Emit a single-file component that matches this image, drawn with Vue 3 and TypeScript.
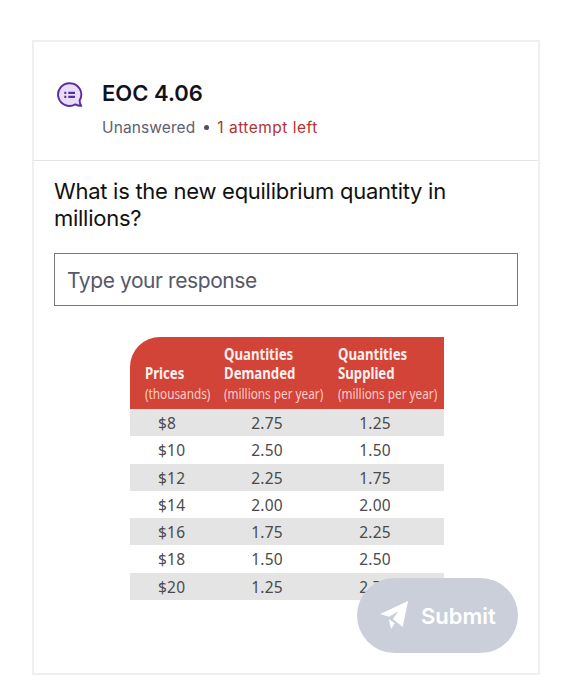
<script setup lang="ts">
import { ref } from 'vue'

interface Row {
  price: string
  demanded: string
  supplied: string
}

const response = ref<string>('')

const rows: Row[] = [
  { price: '$8', demanded: '2.75', supplied: '1.25' },
  { price: '$10', demanded: '2.50', supplied: '1.50' },
  { price: '$12', demanded: '2.25', supplied: '1.75' },
  { price: '$14', demanded: '2.00', supplied: '2.00' },
  { price: '$16', demanded: '1.75', supplied: '2.25' },
  { price: '$18', demanded: '1.50', supplied: '2.50' },
  { price: '$20', demanded: '1.25', supplied: '2.75' },
]
</script>

<template>
  <main class="page">
    <section class="card">
      <header class="head">
        <svg class="badge" viewBox="0 0 28 28" aria-hidden="true">
          <path
            d="M13.5 2.2a11.4 11.4 0 1 0 5.8 21.2c2 1.100 3.900 1.600 6 1.500-1.100-1.700-1.700-3.300-1.700-5.400A11.400 11.400 0 0 0 13.500 2.200Z"
            fill="#e9dcf8" stroke="#5a2ca0" stroke-width="1.9" stroke-linejoin="round"
          />
          <path d="M8.300 11.900h2M12.300 11.900h6.700M8.300 15.900h2M12.300 15.900h6.700" stroke="#5a2ca0" stroke-width="2.1" />
        </svg>
        <div class="titles">
          <h1 class="title">EOC 4.06</h1>
          <p class="meta">
            <span class="status">Unanswered</span>
            <span class="dot"></span>
            <span class="attempts">1 attempt left</span>
          </p>
        </div>
      </header>
      <div class="body">
        <p class="question">What is the new equilibrium quantity in<br />millions?</p>
        <input v-model="response" class="answer" type="text" placeholder="Type your response" />
        <div class="table">
          <div class="thead">
            <div class="th"><b>Prices</b><small class="unit">(thousands)</small></div>
            <div class="th"><b>Quantities<br />Demanded</b><small class="unit">(millions per year)</small></div>
            <div class="th"><b>Quantities<br />Supplied</b><small class="unit">(millions per year)</small></div>
          </div>
          <div v-for="row in rows" :key="row.price" class="tr">
            <span class="price">{{ row.price }}</span>
            <span>{{ row.demanded }}</span>
            <span>{{ row.supplied }}</span>
          </div>
        </div>
      </div>
      <button class="submit" type="button">
        <svg class="plane" viewBox="0 0 30 30" aria-hidden="true">
          <path d="M29 0 0 13.500 9.300 16.400 19 10.500 13.300 18.500 23.500 27Z" fill="#fff" />
          <path d="M9 18.500 11.500 29 15.200 23Z" fill="#fff" />
        </svg>
        <span class="label">Submit</span>
      </button>
    </section>
  </main>
</template>

<style>
body {
  margin: 0;
  background: #fff;
}
</style>

<style scoped>
.page {
  box-sizing: border-box;
  height: 700px;
  padding: 40px 32px 25px;
  font-family: Inter, "Liberation Sans", sans-serif;
}
.card {
  position: relative;
  box-sizing: border-box;
  width: 508px;
  height: 635px;
  border: 2px solid #efeff0;
}
.head {
  display: flex;
  box-sizing: border-box;
  height: 119px;
  padding: 39px 0 0 22px;
  border-bottom: 1px solid #e4e4e6;
}
.badge {
  width: 28px;
  height: 28px;
  flex: none;
}
.titles {
  margin-left: 18px;
}
.title {
  margin: -2px 0 0;
  font-size: 22px;
  line-height: 28px;
  font-weight: 600;
  letter-spacing: 0;
  color: #12121f;
  white-space: nowrap;
}
.meta {
  display: flex;
  align-items: center;
  margin: 10px 0 0;
  font-size: 15.5px;
  line-height: 22px;
  letter-spacing: 0.1px;
  white-space: nowrap;
}
.status {
  color: #5d6070;
}
.dot {
  width: 5px;
  height: 5px;
  margin: 0 8px 2px 9px;
  border-radius: 50%;
  background: #4d4f60;
}
.attempts {
  letter-spacing: 0.5px;
  color: #b23230;
}
.body {
  padding: 17px 20px 0;
}
.question {
  margin: 0;
  font-size: 22px;
  line-height: 27px;
  letter-spacing: -0.27px;
  color: #111;
  white-space: nowrap;
}
.answer {
  display: block;
  box-sizing: border-box;
  width: 464px;
  height: 53px;
  margin: 21px 0 0;
  padding: 2px 13px 0 12px;
  border: 1.5px solid #77778a;
  border-radius: 0;
  background: #fff;
  font-family: inherit;
  font-size: 21px;
  letter-spacing: -0.42px;
  color: #111;
  outline: none;
}
.answer::placeholder {
  color: #565869;
  opacity: 1;
}
.table {
  width: 314px;
  margin: 31px 0 0 76px;
  font-family: "Noto Sans", "Open Sans", sans-serif;
}
.thead {
  display: grid;
  grid-template-columns: 79px 114px 106px;
  align-items: end;
  box-sizing: border-box;
  height: 72px;
  padding: 0 0 6px 15px;
  border-radius: 30px 0 0 0;
  background: #d24338;
  color: #fff1ee;
}
.th {
  display: flex;
  flex-direction: column;
  align-items: flex-start;
  white-space: nowrap;
}
.th b,
.unit {
  transform: scaleX(0.85);
  transform-origin: left;
  font-size: 15.5px;
  line-height: 19px;
}
.unit {
  transform: scaleX(0.785);
  font-size: 15px;
  line-height: 20px;
  color: #fbcfc8;
}
.tr {
  display: grid;
  grid-template-columns: 82px 110px 106px;
  box-sizing: border-box;
  padding: 1px 16px 0 0;
  height: 27.3px;
  line-height: 26.3px;
  font-size: 15.5px;
  letter-spacing: 0.2px;
  text-align: center;
  color: #4a4a4c;
}
.price {
  padding-left: 28px;
  text-align: left;
}
.tr:nth-child(even) {
  background: #e4e4e4;
}
.submit {
  position: absolute;
  right: 20px;
  bottom: 20px;
  display: flex;
  align-items: center;
  box-sizing: border-box;
  width: 161px;
  height: 75px;
  padding: 0 0 0 23px;
  border: 0;
  border-radius: 38px;
  background: #cbcfda;
  color: #fff;
  font-family: inherit;
}
.plane {
  width: 29px;
  height: 29px;
}
.label {
  margin-left: 12px;
  font-size: 22px;
  font-weight: 600;
}
</style>
